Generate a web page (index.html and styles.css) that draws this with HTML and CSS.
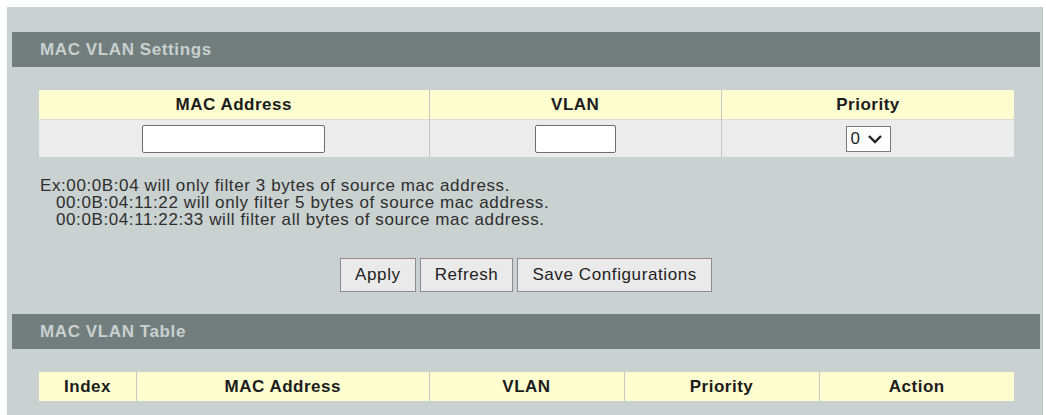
FILE: index.html
```html
<!DOCTYPE html>
<html lang="en">
<head>
    <meta charset="UTF-8">
    <meta name="viewport" content="width=device-width, initial-scale=1.0">
    <title>MAC VLAN</title>
    <link rel="stylesheet" href="styles.css">
</head>
<body>
    <div class="panel">
        <div class="bar">MAC VLAN Settings</div>

        <table class="grid settings">
            <colgroup><col class="w40"><col class="w30"><col class="w30"></colgroup>
            <thead>
                <tr><th>MAC Address</th><th>VLAN</th><th>Priority</th></tr>
            </thead>
            <tbody>
                <tr>
                    <td><input type="text" id="mac" class="mac"></td>
                    <td><input type="text" id="vlan" class="vlan"></td>
                    <td>
                        <label class="pick">
                            <select id="priority">
                                <option>0</option><option>1</option><option>2</option><option>3</option>
                                <option>4</option><option>5</option><option>6</option><option>7</option>
                            </select>
                            <svg width="16" height="10" viewBox="0 0 16 10"><path d="M2 2 L8 8 L14 2" fill="none" stroke="#222" stroke-width="2.4"/></svg>
                        </label>
                    </td>
                </tr>
            </tbody>
        </table>

        <div class="note">
            <div>Ex:00:0B:04 will only filter 3 bytes of source mac address.</div>
            <div class="indent">00:0B:04:11:22 will only filter 5 bytes of source mac address.</div>
            <div class="indent">00:0B:04:11:22:33 will filter all bytes of source mac address.</div>
        </div>

        <div class="actions">
            <button>Apply</button>
            <button>Refresh</button>
            <button>Save Configurations</button>
        </div>

        <div class="bar">MAC VLAN Table</div>

        <table class="grid list">
            <colgroup><col class="w10"><col class="w30"><col class="w20"><col class="w20"><col class="w20"></colgroup>
            <thead>
                <tr><th>Index</th><th>MAC Address</th><th>VLAN</th><th>Priority</th><th>Action</th></tr>
            </thead>
            <tbody id="mac-vlan-list"></tbody>
        </table>
    </div>
</body>
</html>
```

FILE: styles.css
```css
body { margin: 7px 3px 0 7px; background: #fff; font-family: "Liberation Sans", Arial, sans-serif; font-size: 17px; letter-spacing: 0.6px; color: #2e2e2e; }
.panel { background: #c9d1d1; padding: 25px 2px 15px 5px; border-right: 1px solid #bcc4c4; }
.bar { height: 35px; line-height: 35px; background: #727e7e; color: #c9d0d0; font-weight: bold; padding-left: 28px; }

/* yellow-headed tables */
.grid { width: 975px; margin: 23px 0 0 27px; border-collapse: collapse; table-layout: fixed; }
.grid th { height: 29px; padding: 0; background: #fdfdcf; color: #1c1c1c; font-weight: bold; letter-spacing: 0.5px; text-align: center; }
.grid td { height: 37px; padding: 0; background: #ececec; text-align: center; border-top: 1px solid #dcdcdc; }
.grid th + th, .grid td + td { border-left: 1px solid #c6c6c2; }
.w10 { width: 10%; } .w20 { width: 20%; } .w30 { width: 30%; } .w40 { width: 40%; }

input { height: 28px; box-sizing: border-box; border: 1px solid #6e6e6e; border-radius: 2px; background: #fff; vertical-align: middle; }
.mac { width: 183px; }
.vlan { width: 81px; }
.pick { display: inline-flex; align-items: center; gap: 4px; width: 45px; height: 26px; box-sizing: border-box; padding: 0 4px; border: 1px solid #7a7a7a; background: #fff; vertical-align: middle; }
.pick select { appearance: none; border: 0; background: transparent; font: inherit; color: #222; padding: 0; width: 12px; }

.note { margin-top: 20px; padding-left: 28px; line-height: 17px; }
.note .indent { padding-left: 16px; }

.actions { display: flex; justify-content: center; gap: 4px; margin: 30px 0 22px; }
button { height: 34px; padding: 0 14px; border: 1px solid #8c8c8c; background: #eaeaea; font: inherit; letter-spacing: 0.6px; color: #222; }
```
